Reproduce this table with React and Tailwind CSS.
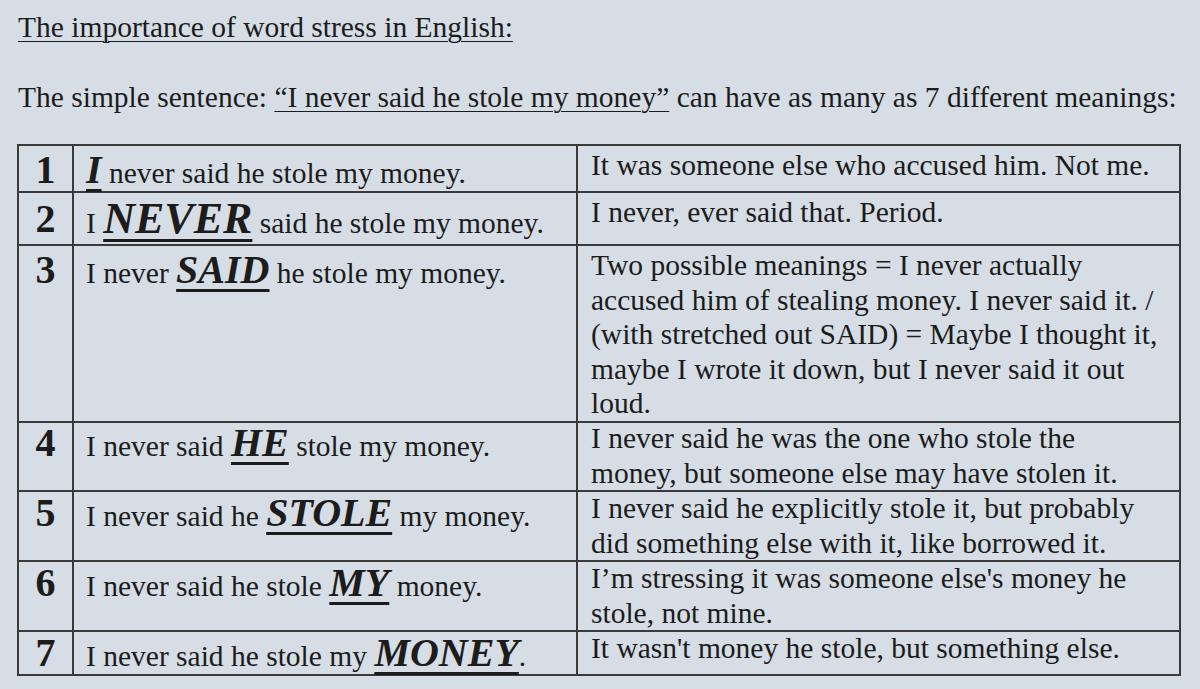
const rows = [
  {
    n: "1",
    h: "h-[47px]",
    pt: "pt-[7px]",
    before: "",
    word: "I",
    after: " never said he stole my money.",
    meaning: ["It was someone else who accused him. Not me."],
  },
  {
    n: "2",
    h: "h-[53px]",
    pt: "pt-[9px]",
    before: "I ",
    word: "NEVER",
    big: true,
    after: " said he stole my money.",
    meaning: ["I never, ever said that. Period."],
  },
  {
    n: "3",
    h: "h-[173px]",
    pt: "pt-[7px]",
    before: "I never ",
    word: "SAID",
    after: " he stole my money.",
    meaning: [
      "Two possible meanings = I never actually",
      "accused him of stealing money. I never said it. /",
      "(with stretched out SAID) = Maybe I thought it,",
      "maybe I wrote it down, but I never said it out",
      "loud.",
    ],
  },
  {
    n: "4",
    h: "h-[70px]",
    pt: "pt-[7px]",
    before: "I never said ",
    word: "HE",
    after: " stole my money.",
    meaning: [
      "I never said he was the one who stole the",
      "money, but someone else may have stolen it.",
    ],
  },
  {
    n: "5",
    h: "h-[70px]",
    pt: "pt-[7px]",
    before: "I never said he ",
    word: "STOLE",
    after: " my money.",
    meaning: [
      "I never said he explicitly stole it, but probably",
      "did something else with it, like borrowed it.",
    ],
  },
  {
    n: "6",
    h: "h-[70px]",
    pt: "pt-[7px]",
    before: "I never said he stole ",
    word: "MY",
    after: " money.",
    meaning: [
      "I\u2019m stressing it was someone else's money he",
      "stole, not mine.",
    ],
  },
  {
    n: "7",
    h: "h-[47px]",
    pt: "pt-[7px]",
    before: "I never said he stole my ",
    word: "MONEY",
    after: ".",
    meaning: ["It wasn't money he stole, but something else."],
  },
];

function StressRow({ row }) {
  return (
    <div className={`grid grid-cols-[55px_504px_603px] ${row.h}`}>
      <div
        className={`border-r-2 border-b-2 border-[#3a3a3a] text-center font-bold text-[40px] ${row.pt}`}
      >
        {row.n}
      </div>
      <div
        className={`border-r-2 border-b-2 border-[#3a3a3a] pl-[12px] whitespace-pre ${row.pt}`}
      >
        {row.before}
        <span
          className={`font-bold italic underline decoration-[3px] underline-offset-[6px] ${
            row.big ? "text-[44px]" : "text-[40px]"
          }`}
        >
          {row.word}
        </span>
        {row.after}
      </div>
      <div className="border-r-2 border-b-2 border-[#3a3a3a] pl-[13px] pt-[2px]">
        {row.meaning.map((line, i) => (
          <div key={i} className="whitespace-pre">
            {line}
          </div>
        ))}
      </div>
    </div>
  );
}

export default function App() {
  return (
    <div className="w-[1200px] h-[689px] overflow-hidden bg-[#d6dde5] text-[#1c1c1c] font-['Liberation_Serif','Times_New_Roman',serif] text-[29.5px] leading-[34.5px]">
      <div className="pl-[18px] pt-[10px]">
        <span className="underline decoration-1 underline-offset-[4px]">
          The importance of word stress in English:
        </span>
      </div>

      <div className="pl-[18px] mt-[35px] whitespace-nowrap">
        The simple sentence:{" "}
        <span className="underline decoration-1 underline-offset-[4px]">
          “I never said he stole my money”
        </span>{" "}
        can have as many as 7 different meanings:
      </div>

      <div className="ml-[17px] mt-[30px] w-[1164px] border-t-2 border-l-2 border-[#3a3a3a]">
        {rows.map((row) => (
          <StressRow key={row.n} row={row} />
        ))}
      </div>
    </div>
  );
}
